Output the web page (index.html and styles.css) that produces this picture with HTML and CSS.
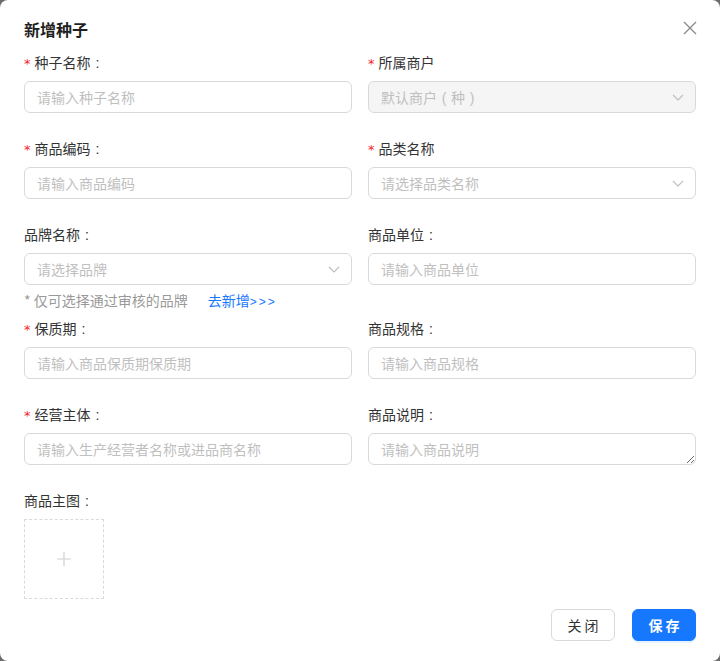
FILE: index.html
```html
<!DOCTYPE html>
<html lang="zh-CN">
<head>
<meta charset="utf-8">
<title>新增种子</title>
<link rel="stylesheet" href="styles.css">
</head>
<body>
<div class="modal">
  <div class="header">
    <div class="title">新增种子</div>
    <button class="close" aria-label="关闭">
      <svg width="14" height="14" viewBox="0 0 14 14"><path d="M1 1L13 13M13 1L1 13" stroke="#8c8c8c" stroke-width="1.4" fill="none"/></svg>
    </button>
  </div>
  <div class="form">
    <div class="item">
      <div class="label"><span class="req">*</span>种子名称<span class="p">:</span></div>
      <div class="input"><span class="ph">请输入种子名称</span></div>
    </div>
    <div class="item">
      <div class="label"><span class="req">*</span>所属商户</div>
      <div class="input select disabled"><span class="ph">默认商户<span class="p">(</span>种<span class="p">)</span></span><svg class="arrow" width="12" height="7" viewBox="0 0 12 7"><path d="M1 1L6 6L11 1" stroke="#bfbfbf" stroke-width="1.2" fill="none"/></svg></div>
    </div>
    <div class="item">
      <div class="label"><span class="req">*</span>商品编码<span class="p">:</span></div>
      <div class="input"><span class="ph">请输入商品编码</span></div>
    </div>
    <div class="item">
      <div class="label"><span class="req">*</span>品类名称</div>
      <div class="input select"><span class="ph">请选择品类名称</span><svg class="arrow" width="12" height="7" viewBox="0 0 12 7"><path d="M1 1L6 6L11 1" stroke="#bfbfbf" stroke-width="1.2" fill="none"/></svg></div>
    </div>
    <div class="item with-hint">
      <div class="label">品牌名称<span class="p">:</span></div>
      <div class="input select"><span class="ph">请选择品牌</span><svg class="arrow" width="12" height="7" viewBox="0 0 12 7"><path d="M1 1L6 6L11 1" stroke="#bfbfbf" stroke-width="1.2" fill="none"/></svg></div>
      <div class="hint"><span class="hint-text">* 仅可选择通过审核的品牌</span><a class="link">去新增<span class="gt">&gt;&gt;&gt;</span></a></div>
    </div>
    <div class="item">
      <div class="label">商品单位<span class="p">:</span></div>
      <div class="input"><span class="ph">请输入商品单位</span></div>
    </div>
    <div class="item">
      <div class="label"><span class="req">*</span>保质期<span class="p">:</span></div>
      <div class="input"><span class="ph">请输入商品保质期保质期</span></div>
    </div>
    <div class="item">
      <div class="label">商品规格<span class="p">:</span></div>
      <div class="input"><span class="ph">请输入商品规格</span></div>
    </div>
    <div class="item">
      <div class="label"><span class="req">*</span>经营主体<span class="p">:</span></div>
      <div class="input"><span class="ph">请输入生产经营者名称或进品商名称</span></div>
    </div>
    <div class="item">
      <div class="label">商品说明<span class="p">:</span></div>
      <textarea class="textarea" placeholder="请输入商品说明"></textarea>
    </div>
    <div class="item full">
      <div class="label">商品主图<span class="p">:</span></div>
      <div class="upload"><svg width="14" height="14" viewBox="0 0 14 14"><path d="M7 0V14M0 7H14" stroke="#d0d0d0" stroke-width="1.2"/></svg></div>
    </div>
  </div>
  <div class="footer">
    <button class="btn">关 闭</button>
    <button class="btn primary">保 存</button>
  </div>
</div>
</body>
</html>
```
FILE: styles.css
```css
* { box-sizing: border-box; }
html, body { margin: 0; padding: 0; }
body {
  background: #6b6b6b;
  font-family: "Noto Sans CJK SC", "Noto Sans", sans-serif;
  font-size: 14px;
  color: #333;
}
.modal {
  width: 720px;
  height: 661px;
  background: #fff;
  border-radius: 8px;
  padding: 17px 24px 20px;
  display: flex;
  flex-direction: column;
}
.header {
  display: flex;
  justify-content: space-between;
  align-items: flex-start;
  height: 24px;
  margin-bottom: 10px;
}
.title {
  font-size: 16px;
  font-weight: 700;
  line-height: 24px;
  color: #1f1f1f;
}
.close {
  border: 0;
  background: none;
  padding: 0;
  margin: 4px -1px 0 0;
  width: 14px;
  height: 14px;
  display: flex;
}
.p {
  display: inline-block;
  width: 14px;
  text-align: center;
  font-family: "Liberation Sans", sans-serif;
}
.form {
  display: grid;
  grid-template-columns: 328px 328px;
  column-gap: 16px;
}
.item { padding-bottom: 24px; }
.item.with-hint { padding-bottom: 5px; }
.item.full { grid-column: 1 / 3; padding-bottom: 0; }
.label {
  line-height: 22px;
  height: 22px;
  margin-bottom: 8px;
  color: #333;
}
.req {
  color: #f5222d;
  margin-right: 4px;
  font-family: "DejaVu Sans", sans-serif;
  font-size: 13px;
}
.input {
  height: 32px;
  border: 1px solid #d9d9d9;
  border-radius: 6px;
  padding: 0 12px;
  display: flex;
  align-items: center;
  justify-content: space-between;
  background: #fff;
}
.input.disabled { background: #f5f5f5; }
.ph { color: #bfbfbf; }
.arrow { margin-right: -1px; }
.hint {
  margin-top: 5px;
  line-height: 20px;
  color: #999;
  display: flex;
}
.hint-text { font-size: 14px; }
.link {
  color: #1677ff;
  margin-left: 20px;
}
.gt { letter-spacing: 2px; font-family: "Liberation Sans", sans-serif; font-size: 12px; }
.textarea {
  display: block;
  width: 100%;
  height: 32px;
  min-height: 32px;
  border: 1px solid #d9d9d9;
  border-radius: 6px;
  padding: 5px 12px;
  font: inherit;
  line-height: 20px;
  resize: vertical;
  outline: none;
}
.textarea::placeholder { color: #bfbfbf; }
.upload {
  width: 80px;
  height: 80px;
  border: 1px dashed #d9d9d9;
  display: flex;
  align-items: center;
  justify-content: center;
}
.footer {
  margin-top: auto;
  display: flex;
  justify-content: flex-end;
  gap: 17px;
}
.btn {
  width: 64px;
  height: 32px;
  border: 1px solid #d9d9d9;
  border-radius: 6px;
  background: #fff;
  font-family: inherit;
  font-size: 14px;
  color: #333;
  padding: 0;
}
.btn.primary {
  background: #1677ff;
  border-color: #1677ff;
  color: #fff;
  font-weight: 700;
  box-shadow: 0 2px 0 rgba(5,145,255,0.1);
}
```
